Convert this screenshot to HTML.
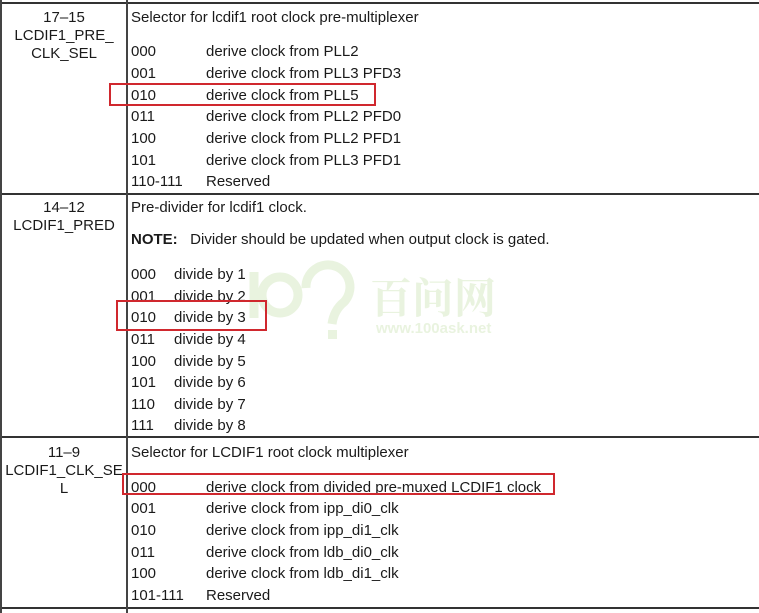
<!DOCTYPE html>
<html><head><meta charset="utf-8"><style>
body{margin:0;width:759px;height:613px;background:#fff;position:relative;overflow:hidden;font-family:"Liberation Sans",Arial,sans-serif;font-size:15px;color:#1a1a1a}
.t{position:absolute;white-space:nowrap;line-height:16px;margin-top:2px}
.c{position:absolute;left:0;width:128px;text-align:center;line-height:18px;margin-top:2px}
.h{position:absolute;background:#333;height:2px;left:0;width:759px}
.v{position:absolute;background:#444;width:2px;top:0;height:613px}
.r{position:absolute;border:2px solid #d0282e;box-sizing:border-box}
</style></head><body>
<svg style="position:absolute;left:0;top:0" width="759" height="613">
<g fill="none" stroke="#e9f3df" stroke-width="9">
<line x1="254" y1="272" x2="254" y2="318"/>
<circle cx="280" cy="295" r="18"/>
<path d="M306 288 a22 22 0 1 1 38 14 q-10 8 -12 22"/>
</g>
<rect x="328" y="330" width="9" height="9" fill="#e9f3df"/>
<text x="370" y="313" font-family="Noto Serif CJK SC,serif" font-weight="bold" font-size="42" fill="#e9f3df">百问网</text>
<text x="376" y="333" font-family="Liberation Sans,sans-serif" font-weight="bold" font-size="15" fill="#e9f3df">www.100ask.net</text>
</svg>
<div class="h" style="top:2px"></div>
<div class="h" style="top:193px"></div>
<div class="h" style="top:436px"></div>
<div class="h" style="top:607px"></div>
<div class="v" style="left:0"></div>
<div class="v" style="left:126px"></div>

<div class="c" style="top:7px">17–15<br>LCDIF1_PRE_<br>CLK_SEL</div>
<div class="t" style="left:131px;top:8px">Selector for lcdif1 root clock pre-multiplexer</div>
<div class="t" style="left:131px;top:42px">000</div><div class="t" style="left:206px;top:42px">derive clock from PLL2</div>
<div class="t" style="left:131px;top:64px">001</div><div class="t" style="left:206px;top:64px">derive clock from PLL3 PFD3</div>
<div class="t" style="left:131px;top:86px">010</div><div class="t" style="left:206px;top:86px">derive clock from PLL5</div>
<div class="t" style="left:131px;top:107px">011</div><div class="t" style="left:206px;top:107px">derive clock from PLL2 PFD0</div>
<div class="t" style="left:131px;top:129px">100</div><div class="t" style="left:206px;top:129px">derive clock from PLL2 PFD1</div>
<div class="t" style="left:131px;top:151px">101</div><div class="t" style="left:206px;top:151px">derive clock from PLL3 PFD1</div>
<div class="t" style="left:131px;top:172px">110-111</div><div class="t" style="left:206px;top:172px">Reserved</div>

<div class="c" style="top:197px">14–12<br>LCDIF1_PRED</div>
<div class="t" style="left:131px;top:198px">Pre-divider for lcdif1 clock.</div>
<div class="t" style="left:131px;top:230px"><b>NOTE:</b>&nbsp;&nbsp; Divider should be updated when output clock is gated.</div>
<div class="t" style="left:131px;top:265px">000</div><div class="t" style="left:174px;top:265px">divide by 1</div>
<div class="t" style="left:131px;top:287px">001</div><div class="t" style="left:174px;top:287px">divide by 2</div>
<div class="t" style="left:131px;top:308px">010</div><div class="t" style="left:174px;top:308px">divide by 3</div>
<div class="t" style="left:131px;top:330px">011</div><div class="t" style="left:174px;top:330px">divide by 4</div>
<div class="t" style="left:131px;top:352px">100</div><div class="t" style="left:174px;top:352px">divide by 5</div>
<div class="t" style="left:131px;top:373px">101</div><div class="t" style="left:174px;top:373px">divide by 6</div>
<div class="t" style="left:131px;top:395px">110</div><div class="t" style="left:174px;top:395px">divide by 7</div>
<div class="t" style="left:131px;top:416px">111</div><div class="t" style="left:174px;top:416px">divide by 8</div>

<div class="c" style="top:442px">11–9<br>LCDIF1_CLK_SE<br>L</div>
<div class="t" style="left:131px;top:443px">Selector for LCDIF1 root clock multiplexer</div>
<div class="t" style="left:131px;top:478px">000</div><div class="t" style="left:206px;top:478px">derive clock from divided pre-muxed LCDIF1 clock</div>
<div class="t" style="left:131px;top:499px">001</div><div class="t" style="left:206px;top:499px">derive clock from ipp_di0_clk</div>
<div class="t" style="left:131px;top:521px">010</div><div class="t" style="left:206px;top:521px">derive clock from ipp_di1_clk</div>
<div class="t" style="left:131px;top:543px">011</div><div class="t" style="left:206px;top:543px">derive clock from ldb_di0_clk</div>
<div class="t" style="left:131px;top:564px">100</div><div class="t" style="left:206px;top:564px">derive clock from ldb_di1_clk</div>
<div class="t" style="left:131px;top:586px">101-111</div><div class="t" style="left:206px;top:586px">Reserved</div>

<div class="r" style="left:109px;top:83px;width:267px;height:23px"></div>
<div class="r" style="left:116px;top:300px;width:151px;height:31px"></div>
<div class="r" style="left:122px;top:473px;width:433px;height:22px"></div>
</body></html>
